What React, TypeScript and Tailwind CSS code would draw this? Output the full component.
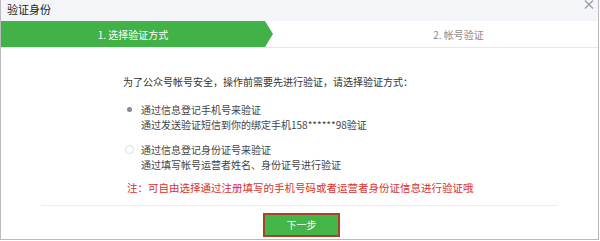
import React from 'react';

const font = { fontFamily: '"Noto Sans CJK SC", "Noto Sans", sans-serif' };

export default function App() {
  return (
    <div
      className="w-[600px] h-[241px] overflow-hidden bg-white"
      style={font}
    >
      <div className="w-[599px] h-[240px] border-l border-r border-b border-[#b9b9bd] flex flex-col">
        {/* Title bar */}
        <div className="h-[21px] bg-[#f4f5f9] flex items-start justify-between pl-[6px] pr-[4px] shrink-0">
          <span className="text-[11px] leading-[19px] text-[#222]">验证身份</span>
          <svg width="10" height="10" viewBox="0 0 10 10">
            <path d="M1 0.5 L9 8.5 M9 0.5 L1 8.5" stroke="#9a9a9a" strokeWidth="1.2" />
          </svg>
        </div>

        {/* Steps */}
        <div className="h-[27px] flex border-b border-[#e7e7eb] shrink-0">
          <div className="w-[272px] h-full bg-[#42b248] flex items-center justify-center pr-[8px] [clip-path:polygon(0_0,264px_0,100%_50%,264px_100%,0_100%)]">
            <span className="text-[10px] text-white">1. 选择验证方式</span>
          </div>
          <div className="flex-1 flex items-center justify-center pl-[46px]">
            <span className="text-[10px] text-[#8d8d8d]">2. 帐号验证</span>
          </div>
        </div>

        {/* Body */}
        <div className="flex-1 flex flex-col">
          <div className="pl-[122px] pt-[26px]">
            <p className="text-[10px] leading-[16px] text-[#333]">为了公众号帐号安全，操作前需要先进行验证，请选择验证方式：</p>

            <div className="mt-[12px] flex">
              <div className="w-[18px] flex justify-start pt-[5px] pl-[4px]">
                <span className="w-[5px] h-[5px] rounded-full bg-[#8a8a8a]" />
              </div>
              <div className="text-[10px] leading-[15px] text-[#444]">
                <div>通过信息登记手机号来验证</div>
                <div>通过发送验证短信到你的绑定手机158******98验证</div>
              </div>
            </div>

            <div className="mt-[10px] flex">
              <div className="w-[18px] flex justify-start pt-[3px] pl-[2px]">
                <span className="w-[9px] h-[9px] rounded-full border border-[#dcdcdc] bg-white" />
              </div>
              <div className="text-[10px] leading-[15px] text-[#444]">
                <div>通过信息登记身份证号来验证</div>
                <div>通过填写帐号运营者姓名、身份证号进行验证</div>
              </div>
            </div>
          </div>

          <p className="pl-[126px] mt-[7px] text-[10.5px] leading-[18px] text-[#d8312e]">
            注：可自由选择通过注册填写的手机号码或者运营者身份证信息进行验证哦
          </p>

          <div className="mx-[40px] mt-[8px] border-t border-[#ececec]" />

          <div className="flex justify-center mt-[7px] pl-[4px]">
            <button className="w-[77px] h-[24px] bg-[#44b549] border-2 border-[#a8432a] text-white text-[10px] leading-none flex items-center justify-center">
              下一步
            </button>
          </div>
        </div>
      </div>
    </div>
  );
}
